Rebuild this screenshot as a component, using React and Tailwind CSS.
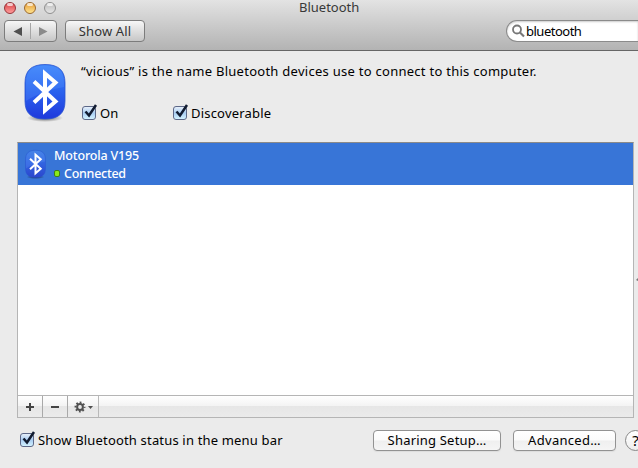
import React from "react";

function Rune({ className, size = "large" }) {
  const small = size === "small";
  const id = `bt-${size}`;
  return (
    <svg className={className} viewBox="0 0 46 62" fill="none">
      <defs>
        <linearGradient id={id} x1="0" y1="0" x2="0" y2="1">
          <stop offset="0" stopColor={small ? "#3c7ae0" : "#3f86fb"} />
          <stop offset="0.5" stopColor={small ? "#3262e0" : "#2a62ee"} />
          <stop offset="1" stopColor={small ? "#2b46cc" : "#1f38dc"} />
        </linearGradient>
        <radialGradient id={`${id}-shadow`}>
          <stop offset="0" stopColor="#000" stopOpacity="0.6" />
          <stop offset="1" stopColor="#000" stopOpacity="0" />
        </radialGradient>
      </defs>
      <ellipse cx="23" cy="56" rx="18" ry="4" fill={`url(#${id}-shadow)`} />
      <path
        d="M23 2.500C37 2.500 43 9 43 21V39C43 51 37 57 23 57S3 51 3 39V21C3 9 9 2.500 23 2.500Z"
        fill={`url(#${id})`}
        stroke="#2853cf"
        strokeWidth="0.8"
      />
      <path
        d="M23 3.500C36 3.500 42 9 42 21V25C30 27 14 32 4 39V21C4 9 10 3.500 23 3.500Z"
        fill="#67a5ff"
        opacity="0.22"
      />
      <path
        d="M12 19.500L33.500 39.500L23 48.500V11.500L33.500 20.500L12 40.500"
        stroke="#fff"
        strokeWidth="4"
        strokeMiterlimit="8"
      />
    </svg>
  );
}

function Check() {
  return (
    <span className="relative block h-[14px] w-[14px] shrink-0 rounded-[3px] border border-[#5d6888] bg-linear-to-b from-[#e6effa] via-[#a9cdf2] to-[#d3f2ff]">
      <svg className="absolute -top-[3px] left-0 h-[16px] w-[16px]" viewBox="0 0 16 16" fill="none">
        <path d="M2.500 7.500L6 11.500L13 1" stroke="#111b30" strokeWidth="2.500" />
      </svg>
    </span>
  );
}

function Light({ className }) {
  return (
    <span className={`relative block h-3 w-3 rounded-full border ${className}`}>
      <span className="absolute left-[2px] top-0 h-[3px] w-[6px] rounded-full bg-white/70" />
    </span>
  );
}

function Header() {
  return (
    <header className="h-[51px] border-b border-[#666] bg-linear-to-b from-[#e3e3e3] to-[#b3b3b3]">
      <div className="grid h-[15px] grid-cols-[1fr_auto_1fr] items-center">
        <div className="flex gap-2 pl-1">
          <Light className="border-[#963339] bg-linear-to-b from-[#d63b44] to-[#ff9b9b]" />
          <Light className="border-[#9b682e] bg-linear-to-b from-[#e49b31] to-[#ffe48d]" />
          <Light className="border-[#909090] bg-linear-to-b from-[#bdbdbd] to-[#e5e5e5]" />
        </div>
        <h1 className="w-[78px] pl-[19px] whitespace-nowrap text-[13px] leading-[15px] text-[#383838]">Bluetooth</h1>
      </div>
      <div className="mt-[5px] flex pl-1">
        <div className="flex h-[22px] w-[53px] items-center rounded-[4px] border border-[#7c7c7c] bg-linear-to-b from-[#f7f7f7] to-[#c7c7c7]">
          <svg className="h-5 w-full" viewBox="0 0 51 20">
            <path d="M8.500 10.500L17 6V15Z" fill="#505050" />
            <path d="M25.500 2V18" stroke="#a5a5a5" />
            <path d="M42.500 10.500L34 6V15Z" fill="#8b8b8b" />
          </svg>
        </div>
        <button className="ml-2 flex h-[22px] w-20 items-center justify-center whitespace-nowrap rounded-[4px] border border-[#7c7c7c] bg-linear-to-b from-[#f7f7f7] to-[#c7c7c7] text-[13px] tracking-[0.15px] text-[#333]">
          Show All
        </button>
        <div className="ml-auto flex h-[22px] w-[132px] items-center overflow-hidden rounded-l-full border border-r-0 border-[#8b8b8b] bg-white pl-1 shadow-[inset_0_1px_2px_#ccc]">
          <svg className="h-[14px] w-[14px]" viewBox="0 0 14 14" fill="none" stroke="#777" strokeWidth="1.800">
            <circle cx="6" cy="5.500" r="4" />
            <path d="M9 8.500L13 12.500" strokeWidth="2.200" />
          </svg>
          <span className="ml-px text-[13px] tracking-[-0.5px]">bluetooth</span>
        </div>
      </div>
    </header>
  );
}

export default function App() {
  return (
    <div className="flex h-[468px] w-[638px] flex-col overflow-hidden bg-[#ebebeb] font-['Noto_Sans','Open_Sans',sans-serif] text-[13px] leading-[18px] text-black">
      <Header />
      <section className="flex h-[91px] pl-[22px] pt-[11px]">
        <Rune className="h-[62px] w-[46px]" />
        <div className="ml-[13px] whitespace-nowrap">
          <p className="tracking-[0.27px]">“vicious” is the name Bluetooth devices use to connect to this computer.</p>
          <div className="mt-6 flex items-center">
            <label className="flex w-[91px] items-center gap-1 pl-px"><Check />On</label>
            <label className="flex items-center gap-1 pl-px tracking-[0.2px]"><Check />Discoverable</label>
          </div>
        </div>
      </section>
      <div className="flex">
        <section className="ml-[17px] flex h-[276px] w-[617px] flex-col border border-[#b5b5b5] border-t-[#8a8a8a] bg-white">
          <div className="flex h-[42px] items-center bg-[#3875d7] pl-[6px] text-white">
            <Rune className="h-[31px] w-[23px]" size="small" />
            <div className="ml-[7px] whitespace-nowrap pt-[2px] text-[12.5px] font-medium tracking-[-0.16px]">
              <div>Motorola V195</div>
              <div className="flex items-center gap-1 tracking-[-0.28px]">
                <span className="-mt-px h-[7px] w-[6px] rounded-[2px] border border-[#3d7d1c] bg-[#8bea18]" />
                Connected
              </div>
            </div>
          </div>
          <div className="mt-auto flex h-[22px] border-t border-[#b5b5b5] bg-[linear-gradient(#fff_0%,#f3f3f3_48%,#e6e6e6_49%,#ebebeb_100%)]">
            <div className="flex w-[25px] items-center justify-center border-r border-[#a9a9a9] pr-px pt-px">
              <svg className="h-[8px] w-[8px]" viewBox="0 0 8 8" stroke="#444" strokeWidth="2"><path d="M0 4H8M4 0V8" /></svg>
            </div>
            <div className="flex w-[25px] items-center justify-center border-r border-[#a9a9a9] pr-px pt-px">
              <svg className="h-[8px] w-[8px]" viewBox="0 0 8 8" stroke="#444" strokeWidth="2"><path d="M0 4H8" /></svg>
            </div>
            <div className="flex w-[31px] items-center border-r border-[#b9b9b9] pl-[6px] pt-px">
              <svg className="h-[12px] w-[20px]" viewBox="0 0 20 12" fill="none">
                <circle cx="6" cy="6" r="2.900" stroke="#505050" strokeWidth="2" />
                <circle cx="6" cy="6" r="4.600" stroke="#505050" strokeWidth="1.700" strokeDasharray="1.800 1.813" strokeDashoffset=".9" />
                <path d="M14 5H19L16.500 8Z" fill="#505050" />
              </svg>
            </div>
          </div>
        </section>
        <svg className="mt-[135px] ml-[2px] h-[5px] w-[2px]" viewBox="0 0 2 5"><path d="M0 3L2 1V4Z" fill="#777" /></svg>
      </div>
      <footer className="flex h-[50px] items-start whitespace-nowrap pl-5 pt-3">
        <label className="-mt-px flex h-[22px] w-[353px] shrink-0 items-center gap-1 tracking-[0.17px]"><Check />Show Bluetooth status in the menu bar</label>
        <button className="h-[21px] w-32 shrink-0 rounded-[4px] border border-[#929292] bg-[linear-gradient(#fff_0%,#fbfbfb_48%,#efefef_52%,#f5f5f5_100%)] leading-[19px] tracking-[0.2px] shadow-[0_1px_1px_#ddd]">Sharing Setup…</button>
        <button className="ml-3 h-[21px] w-[103px] shrink-0 rounded-[4px] border border-[#929292] bg-[linear-gradient(#fff_0%,#fbfbfb_48%,#efefef_52%,#f5f5f5_100%)] leading-[19px] tracking-[0.3px] shadow-[0_1px_1px_#ddd]">Advanced…</button>
        <button className="ml-[9px] h-[21px] w-[21px] shrink-0 rounded-full border border-[#888] bg-linear-to-b from-white to-[#eee] text-[15px] leading-[19px]">?</button>
      </footer>
    </div>
  );
}
